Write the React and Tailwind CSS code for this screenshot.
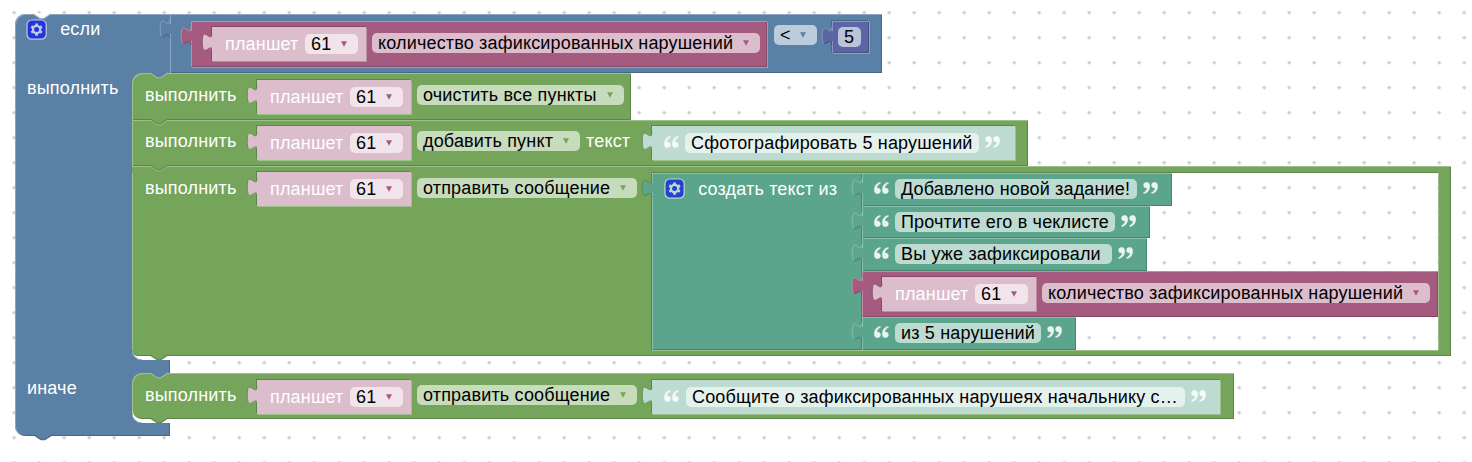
import React from "react";

const COLORS = {
  blue: { base: "#5b80a5", light: "#8ca6c0", dark: "#496684" },
  purple: { base: "#a55b80", light: "#c08ca6", dark: "#844966" },
  green: { base: "#74a55b", light: "#9ec08c", dark: "#5d8449" },
  teal: { base: "#5ba58c", light: "#8cc0ae", dark: "#498470" },
  indigo: { base: "#5b67a5", light: "#8c95c0", dark: "#495284" },
  pink: { base: "#dbbdcc" },
  mint: { base: "#bddbd1" },
};

const RAISED = {
  blue: "bg-[#5b80a5] shadow-[inset_1px_1px_0_#8ca6c0,inset_-1px_-1px_0_#496684]",
  purple: "bg-[#a55b80] shadow-[inset_1px_1px_0_#c08ca6,inset_-1px_-1px_0_#844966]",
  green: "bg-[#74a55b] shadow-[inset_1px_1px_0_#9ec08c,inset_-1px_-1px_0_#5d8449]",
  teal: "bg-[#5ba58c] shadow-[inset_1px_1px_0_#8cc0ae,inset_-1px_-1px_0_#498470]",
};

const RECESS = {
  purple: "shadow-[-1px_-1px_0_#844966,1px_1px_0_#c08ca6]",
  green: "shadow-[-1px_-1px_0_#5d8449,1px_1px_0_#9ec08c]",
};

/* Puzzle tab on the left edge of a value block. */
function Tab({ color, edge, shade }) {
  return (
    <svg className="pointer-events-none absolute top-0 right-full -mr-px" width="12" height="30" viewBox="-9 0 10 25">
      <path d="M0,5 c0,10 -8,-8 -8,7.5 s8,-2.5 8,7.5 z" fill={color} />
      <rect x="-0.9" y="8.4" width="1.9" height="8.2" fill={color} />
      {shade && (
        <path d="M-6.3,19 C-4.8,18.9 -2.8,16.2 -1,17.2 C-0.3,17.7 0,18.6 0,20" fill="none" stroke={shade} strokeWidth="0.9" />
      )}
      <path
        d="M0,5 c0,10 -8,-8 -8,7.5 C-8,15.8 -7.6,17.9 -6.8,18.7"
        fill="none"
        stroke={edge}
        strokeWidth="0.8"
        strokeOpacity="0.9"
      />
    </svg>
  );
}

/* Downward connector between stacked statement blocks. */
function Notch({ className, fill, line, under }) {
  return (
    <svg className={`pointer-events-none absolute z-10 ${className}`} width="20" height="8" viewBox="-1 -1 20 8">
      <path d="M0,-1 V0 L7.2,4.8 H10.8 L18,0 V-1 z" fill={fill} />
      <path d="M0,0 L7.2,4.8 H10.8 L18,0" fill="none" stroke={line} strokeWidth="1.1" />
      {under && <path d="M0,1 L7.2,5.8 H10.8 L18,1" fill="none" stroke={under} strokeWidth="0.9" />}
    </svg>
  );
}

function Gear() {
  return (
    <svg className="block shrink-0 overflow-visible opacity-60" width="19.2" height="19.2" viewBox="0 0 16 16">
      <rect width="16" height="16" rx="4" fill="#00f" stroke="#fff" />
      <g fill="none" stroke="#fff">
        <circle cx="8" cy="8" r="3.05" strokeWidth="1.9" />
        <path
          strokeWidth="2.3"
          d="M8,4.6 V2.9 M8,11.4 V13.1 M10.94,6.3 L12.42,5.45 M5.06,9.7 L3.58,10.55 M10.94,9.7 L12.42,10.55 M5.06,6.3 L3.58,5.45"
        />
      </g>
    </svg>
  );
}

function Quote({ closing, className = "" }) {
  const mark =
    "M6.2,0.2 C2.2,1.2 0.2,4.2 0.2,8 C0.2,10.4 1.4,11.8 3.4,11.8 C5.2,11.8 6.5,10.6 6.5,8.8 C6.5,7.1 5.3,6 3.8,6 C3.4,6 3.1,6.1 2.8,6.2 C3,4 4.3,2.5 6.6,1.3 Z";
  return (
    <svg className={`mt-[3px] block shrink-0 ${className}`} width="15" height="12" viewBox="0 0 15 12">
      <g fill="#fff" stroke="#fff" strokeWidth="0.3" opacity="0.88" transform={closing ? "rotate(180 7.5 6)" : undefined}>
        <path d={mark} />
        <path d={mark} transform="translate(8)" />
      </g>
    </svg>
  );
}

function Pill({ className, arrow, children }) {
  return (
    <div className={`flex h-5 shrink-0 items-center justify-between rounded-[5px] pl-1.5 whitespace-pre text-black ${arrow ? "pr-[11px]" : ""} ${className}`}>
      <span>{children}</span>
      {arrow && (
        <svg className="shrink-0" width="6" height="6" viewBox="0 0 6 6">
          <path d="M0,0.3 H6 L3,5.7 Z" fill={arrow} />
        </svg>
      )}
    </div>
  );
}

function Tablet({ parent }) {
  return (
    <div className={`relative flex h-[34px] w-[154px] shrink-0 items-start bg-[#dbbdcc] pt-[7px] pl-[13px] ${RECESS[parent]}`}>
      <Tab color={COLORS.pink.base} edge={COLORS[parent].dark} />
      <span className="w-20 text-white">планшет</span>
      <Pill className="w-[53px] bg-[#f1e5eb]" arrow="#a55b80">61</Pill>
    </div>
  );
}

function ViolationCount({ inset }) {
  return (
    <div className={`relative flex h-[46px] w-[576px] shrink-0 items-start pt-1.5 ${RAISED.purple} ${inset}`}>
      <Tab color={COLORS.purple.base} edge={COLORS.purple.light} shade={COLORS.purple.dark} />
      <Tablet parent="purple" />
      <Pill className="mt-1.5 ml-1.5 w-[388px] bg-[#dbbdcc]" arrow="#a55b80">
        количество зафиксированных нарушений
      </Pill>
    </div>
  );
}

function TextItem({ className, pill, children }) {
  return (
    <div className={`relative flex items-start pt-1.5 pl-3 ${RAISED.teal} ${className}`}>
      <Tab color={COLORS.teal.base} edge={COLORS.teal.light} shade={COLORS.teal.dark} />
      <Quote />
      <Pill className={`ml-1.5 bg-[#bddbd1] ${pill}`}>{children}</Pill>
      <Quote closing className="ml-1.5" />
    </div>
  );
}

function TextShadow({ className, pill, children }) {
  return (
    <div className={`relative flex h-[34px] shrink-0 items-start bg-[#bddbd1] pt-[7px] pl-3 ${RECESS.green} ${className}`}>
      <Tab color={COLORS.mint.base} edge={COLORS.green.dark} />
      <Quote />
      <Pill className={`bg-[#e5f1ed] ${pill}`}>{children}</Pill>
      <Quote closing className="ml-1.5" />
    </div>
  );
}

function Execute({ method, pill, drop = "mt-[5px]" }) {
  return (
    <>
      <span className={`w-28 shrink-0 ${drop}`}>выполнить</span>
      <Tablet parent="green" />
      <Pill className={`ml-1.5 bg-[#c7dbbd] ${drop} ${pill}`} arrow="#74a55b">
        {method}
      </Pill>
    </>
  );
}

/* Concave inner corner at the lower end of a statement mouth. */
function MouthCorner() {
  return (
    <svg className="absolute bottom-0 left-0" width="10" height="10" viewBox="0 0 10 10">
      <path d="M0,0 A10,10 0 0 0 10,10 H0 Z" fill="#5b80a5" />
      <path d="M0,0 A10,10 0 0 0 10,10" fill="none" stroke="#8ca6c0" />
    </svg>
  );
}

function MouthTop() {
  return <div className="absolute top-0 left-0 h-3 w-3 bg-[#5b80a5]" />;
}

function Grid() {
  return (
    <svg className="absolute inset-0" width="1472" height="462">
      <defs>
        <pattern id="dots" width="25" height="25" x="1.7" y="0.2" patternUnits="userSpaceOnUse">
          <path d="M10.7,12.5 H14.3 M12.5,10.7 V14.3" stroke="#c8c8c8" strokeWidth="1.4" />
        </pattern>
      </defs>
      <rect width="1472" height="462" fill="url(#dots)" />
    </svg>
  );
}

export default function App() {
  return (
    <main className="relative h-[462px] w-[1472px] overflow-hidden bg-white pt-3.5 pl-[15px] font-['Liberation_Sans',sans-serif] text-[18px] leading-5 tracking-[0.17px] text-white">
      <Grid />
      <section className="relative flex flex-col">
        {/* condition */}
        <div className="relative flex h-[59px]">
          <div className="flex w-[155px] items-start rounded-tl-[10px] bg-[#5b80a5] pt-1.5 pl-3 shadow-[inset_1px_1px_0_#8ca6c0]">
            <Gear />
            <span className="-mt-px ml-[14px]">если</span>
          </div>
          <Notch className="-top-px left-[17px]" fill="#fff" line={COLORS.blue.light} />
          <div className={`relative flex w-[712px] items-start pt-[7px] pl-[21px] ${RAISED.blue}`}>
            <Tab color={COLORS.blue.base} edge={COLORS.blue.light} shade={COLORS.blue.dark} />
            <div className="shadow-[1px_1px_0_#8ca6c0]">
              <ViolationCount inset="pl-[21px]" />
            </div>
            <Pill className="mt-1 ml-[7px] w-[43px] bg-[#bdccdb]" arrow="#5b80a5">{"<"}</Pill>
            <div className="relative ml-[15px] flex h-8 w-[37px] items-start bg-[#5b67a5] pt-1.5 pl-1.5 shadow-[inset_1px_1px_0_#8c95c0,inset_-1px_-1px_0_#495284,-1px_-1px_0_#496684,1px_1px_0_#8ca6c0]">
              <Tab color={COLORS.indigo.base} edge={COLORS.indigo.light} shade={COLORS.indigo.dark} />
              <Pill className="w-[23px] bg-[#bdc2db]">5</Pill>
            </div>
          </div>
        </div>

        {/* then branch */}
        <div className="flex h-[287px]">
          <div className="w-[117px] bg-[#5b80a5] pt-[5px] pl-3 shadow-[inset_1px_0_0_#8ca6c0]">выполнить</div>
          <div className="relative">
            <MouthTop />
            <MouthCorner />
            <div className={`relative flex h-[47px] w-[499px] items-start rounded-tl-[10px] pt-[7px] pl-[13px] ${RAISED.green}`}>
              <Notch className="-top-px left-[17px]" fill={COLORS.blue.base} line={COLORS.green.light} />
              <Execute method="очистить все пункты" pill="w-[207px]" />
              <Notch className="top-[45px] left-[17px]" fill={COLORS.green.base} line={COLORS.green.dark} under={COLORS.green.light} />
            </div>
            <div className={`relative flex h-[46px] w-[896px] items-start pt-1.5 pl-[13px] ${RAISED.green}`}>
              <Execute method="добавить пункт" pill="w-[163px]" drop="mt-[5.4px]" />
              <span className="mt-[5px] ml-1.5 w-[66px] shrink-0">текст</span>
              <TextShadow className="w-[363px]" pill="ml-1.5 w-[294px]">Сфотографировать 5 нарушений</TextShadow>
              <Notch className="top-[44px] left-[17px]" fill={COLORS.green.base} line={COLORS.green.dark} under={COLORS.green.light} />
            </div>
            <div className="relative flex h-[190px] w-[1319px] flex-col">
              <div className="h-[7px] bg-[#74a55b] shadow-[inset_0_1px_0_#9ec08c,inset_-1px_0_0_#5d8449]">
                <div className="ml-[520px] h-[7px] w-[786px] shadow-[inset_0_-1px_0_#5d8449]" />
              </div>
              <div className="flex h-[177px]">
                <div className="flex w-[520px] shrink-0 items-start bg-[#74a55b] pl-[13px] shadow-[inset_1px_0_0_#9ec08c,inset_-1px_0_0_#5d8449]">
                  <div className="-mt-px flex items-start">
                    <Execute method="отправить сообщение" pill="w-[220px]" drop="mt-1.5" />
                  </div>
                </div>
                <div className={`relative flex w-[210px] shrink-0 items-start pt-1.5 pl-[13px] ${RAISED.teal}`}>
                  <Tab color={COLORS.teal.base} edge={COLORS.green.dark} shade={COLORS.teal.dark} />
                  <Gear />
                  <span className="ml-[14px]">создать текст из</span>
                </div>
                <div className="flex w-[576px] shrink-0 flex-col">
                  <TextItem className="h-[33px] w-[310px]" pill="w-[242px]">Добавлено новой задание!</TextItem>
                  <TextItem className="h-8 w-[288px]" pill="w-[220px]">Прочтите его в чеклисте</TextItem>
                  <TextItem className="h-[33px] w-[285px]" pill="w-[217px]">{"Вы уже зафиксировали "}</TextItem>
                  <ViolationCount inset="pl-5" />
                  <TextItem className="h-[33px] w-[214px]" pill="w-[146px]">из 5 нарушений</TextItem>
                </div>
                <div className="w-[13px] shrink-0 bg-[#74a55b] shadow-[inset_1px_0_0_#9ec08c,inset_-1px_0_0_#5d8449]" />
              </div>
              <div className="h-1.5 rounded-bl-[10px] bg-[#74a55b] shadow-[inset_-1px_-1px_0_#5d8449]">
                <div className="ml-[520px] h-1.5 w-[786px] shadow-[inset_0_1px_0_#9ec08c]" />
              </div>
              <Notch className="top-[188px] left-[17px]" fill={COLORS.green.base} line={COLORS.green.dark} />
            </div>
          </div>
        </div>

        {/* arm between branches */}
        <div className="relative h-[13px] w-[155px] bg-[#5b80a5] shadow-[inset_1px_0_0_#8ca6c0,inset_-1px_0_0_#496684]">
          <Notch className="top-3 left-[134px]" fill={COLORS.blue.base} line={COLORS.green.light} />
        </div>

        {/* else branch */}
        <div className="flex h-[50px]">
          <div className="w-[117px] bg-[#5b80a5] pt-[5px] pl-3 shadow-[inset_1px_0_0_#8ca6c0]">иначе</div>
          <div className="relative">
            <MouthTop />
            <MouthCorner />
            <div className={`relative flex h-[46px] w-[1102px] items-start rounded-l-[10px] pt-[7px] pl-[13px] ${RAISED.green}`}>
              <Execute method="отправить сообщение" pill="w-[220px]" />
              <TextShadow className="ml-[15px] w-[568px]" pill="ml-[7px] w-[499px]">
                Сообщите о зафиксированных нарушеях начальнику с…
              </TextShadow>
              <Notch className="top-[44px] left-[17px]" fill={COLORS.green.base} line={COLORS.green.dark} />
            </div>
          </div>
        </div>

        {/* foot */}
        <div className="relative h-[13px] w-[155px] rounded-bl-[10px] bg-[#5b80a5] shadow-[inset_1px_0_0_#8ca6c0,inset_-1px_-1px_0_#496684]">
          <Notch className="top-[11px] left-[18px]" fill={COLORS.blue.base} line={COLORS.blue.dark} />
        </div>
      </section>
    </main>
  );
}
